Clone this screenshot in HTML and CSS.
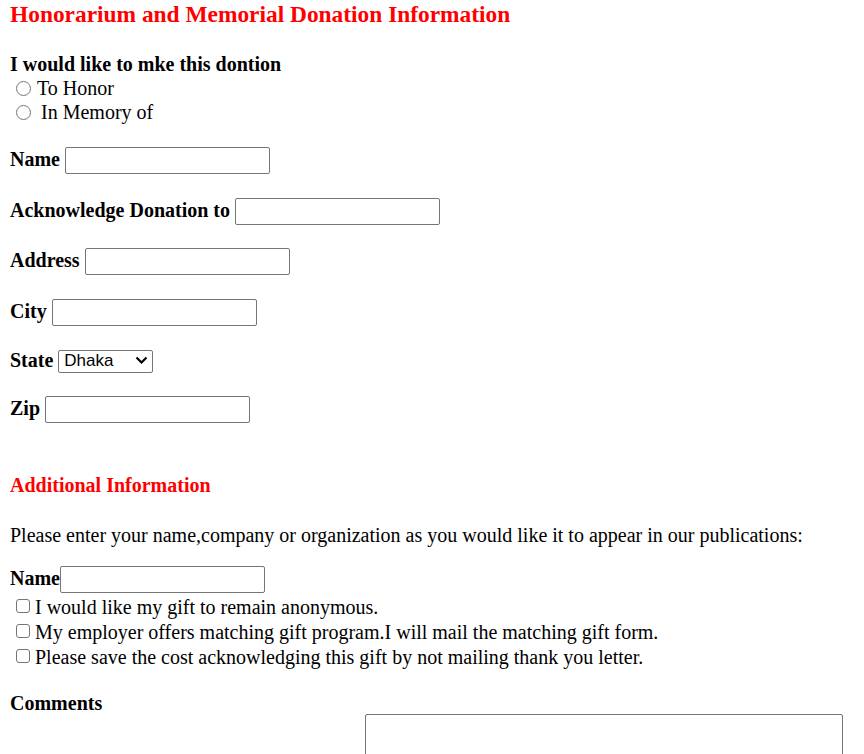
FILE: index.html
```html
<!DOCTYPE html>
<html>
<head>
<meta charset="utf-8">
<title>Honorarium and Memorial Donation Information</title>
<link rel="stylesheet" href="styles.css">
</head>
<body>
<form class="page">
  <h3 class="title">Honorarium and Memorial Donation Information</h3>
  <div class="intro">I would like to mke this dontion</div>
  <label class="choice"><input type="radio" name="kind" class="radio">To Honor</label>
  <label class="choice"><input type="radio" name="kind" class="radio"><span class="spaced">In Memory of</span></label>

  <div class="row r-name"><span class="lbl">Name</span><input type="text" class="field"></div>
  <div class="row r-ack"><span class="lbl">Acknowledge Donation to</span><input type="text" class="field"></div>
  <div class="row r-addr"><span class="lbl">Address</span><input type="text" class="field"></div>
  <div class="row r-city"><span class="lbl">City</span><input type="text" class="field"></div>
  <div class="row r-state"><span class="lbl">State</span>
    <span class="select-wrap">
      <select class="picker"><option>Dhaka</option></select>
      <svg class="chev" width="13" height="9" viewBox="0 0 13 9"><path d="M1.5 1.5 L6.5 6.5 L11.5 1.5" fill="none" stroke="#000000" stroke-width="2.2"/></svg>
    </span>
  </div>
  <div class="row r-zip"><span class="lbl">Zip</span><input type="text" class="field"></div>

  <h4 class="subtitle">Additional Information</h4>
  <p class="note">Please enter your name,company or organization as you would like it to appear in our publications:</p>

  <div class="row r-name2"><span class="lbl">Name</span><input type="text" class="field"></div>
  <label class="check"><input type="checkbox" class="box"><span class="ctext">I would like my gift to remain anonymous.</span></label>
  <label class="check"><input type="checkbox" class="box"><span class="ctext">My employer offers matching gift program.I will mail the matching gift form.</span></label>
  <label class="check"><input type="checkbox" class="box"><span class="ctext">Please save the cost acknowledging this gift by not mailing thank you letter.</span></label>

  <div class="comments">Comments</div>
  <textarea class="area"></textarea>
</form>
</body>
</html>
```
FILE: styles.css
```css
html, body {
  margin: 0;
  padding: 0;
  background: #ffffff;
}
body {
  font-family: "Liberation Serif", "Times New Roman", serif;
  font-size: 20px;
  color: #000000;
}
.page {
  padding: 1px 0 0 10px;
  margin: 0;
}
.title {
  margin: 0;
  font-size: 23.4px;
  line-height: 27px;
  font-weight: bold;
  color: #ff0000;
}
.intro {
  margin-top: 24px;
  font-weight: bold;
  line-height: 24px;
}
.choice {
  display: flex;
  align-items: center;
  height: 24px;
  line-height: 24px;
}
.radio {
  appearance: none;
  -webkit-appearance: none;
  box-sizing: border-box;
  width: 15px;
  height: 15px;
  margin: 0 6px 0 6px;
  border: 1px solid #767676;
  border-radius: 50%;
  background: #ffffff;
}
.spaced {
  margin-left: 4px;
}
.row {
  display: flex;
  align-items: center;
  height: 27px;
  gap: 5px;
}
.lbl {
  font-weight: bold;
  line-height: 23px;
  margin-bottom: 2px;
}
.r-name { margin-top: 23px; }
.r-ack { margin-top: 24px; }
.r-addr { margin-top: 23px; }
.r-city { margin-top: 24px; }
.r-state { margin-top: 24px; height: 22px; }
.r-zip { margin-top: 24px; }
.r-name2 { margin-top: 19px; gap: 0; }
.field {
  box-sizing: border-box;
  width: 205px;
  height: 27px;
  margin: 0;
  border: 1px solid #767676;
  border-radius: 2px;
  background: #ffffff;
  font-family: "Liberation Sans", Arial, sans-serif;
  font-size: 16.5px;
  padding: 1px 3px;
}
.select-wrap {
  position: relative;
  display: inline-flex;
}
.picker {
  appearance: none;
  -webkit-appearance: none;
  box-sizing: border-box;
  width: 95px;
  height: 23px;
  margin: 0;
  border: 1px solid #767676;
  border-radius: 2px;
  background: #ffffff;
  color: #000000;
  font-family: "Liberation Sans", Arial, sans-serif;
  font-size: 17px;
  line-height: 20px;
  padding: 0 0 0 5px;
}
.chev {
  position: absolute;
  right: 5px;
  top: 6px;
  pointer-events: none;
}
.subtitle {
  margin: 51px 0 0 0;
  font-size: 20px;
  line-height: 23px;
  font-weight: bold;
  color: #ff0000;
}
.note {
  margin: 27px 0 0 0;
  line-height: 23px;
}
.check {
  display: flex;
  align-items: center;
  height: 25px;
  line-height: 25px;
}
.ctext {
  padding-top: 3px;
}
.box {
  appearance: none;
  -webkit-appearance: none;
  box-sizing: border-box;
  width: 14px;
  height: 14px;
  margin: 0 5px 0 6px;
  border: 1px solid #767676;
  border-radius: 3px;
  background: #ffffff;
}
.comments {
  margin-top: 24px;
  font-weight: bold;
  line-height: 22px;
}
.area {
  display: block;
  box-sizing: border-box;
  margin: 0 0 0 355px;
  width: 478px;
  height: 80px;
  border: 1px solid #767676;
  border-radius: 2px;
  resize: none;
}
```
